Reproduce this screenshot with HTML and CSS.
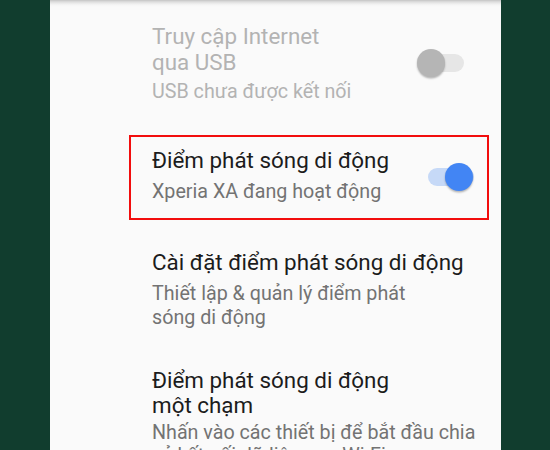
FILE: index.html
```html
<!DOCTYPE html>
<html lang="vi">
<head>
<meta charset="utf-8">
<title>Điểm phát sóng di động</title>
<link rel="stylesheet" href="styles.css">
</head>
<body>
<div class="panel">
  <div class="row row-usb disabled">
    <div class="text">
      <div class="title">Truy cập Internet<br>qua USB</div>
      <div class="sub">USB chưa được kết nối</div>
    </div>
    <div class="switch switch-off"><span class="track"></span><span class="thumb"></span></div>
  </div>
  <div class="row row-hotspot highlighted">
    <div class="text">
      <div class="title">Điểm phát sóng di động</div>
      <div class="sub">Xperia XA đang hoạt động</div>
    </div>
    <div class="switch switch-on"><span class="track"></span><span class="thumb"></span></div>
  </div>
  <div class="row row-settings">
    <div class="text">
      <div class="title">Cài đặt điểm phát sóng di động</div>
      <div class="sub">Thiết lập &amp; quản lý điểm phát<br>sóng di động</div>
    </div>
  </div>
  <div class="row row-onetouch">
    <div class="text">
      <div class="title">Điểm phát sóng di động<br>một chạm</div>
      <div class="sub">Nhấn vào các thiết bị để bắt đầu chia<br>sẻ kết nối dữ liệu qua Wi-Fi</div>
    </div>
  </div>
</div>
</body>
</html>
```

FILE: styles.css
```css
html, body {
  margin: 0;
  padding: 0;
}
body {
  background: #113d2e;
  width: 550px;
  height: 450px;
  overflow: hidden;
  font-family: Roboto, "Noto Sans", sans-serif;
}
.panel {
  margin-left: 50px;
  width: 451px;
  height: 450px;
  overflow: hidden;
  background: linear-gradient(#c2c2c2 0, #d4d4d4 1px, #e8e8e8 3px, #f6f6f6 5px, #fafafa 7px);
  display: flex;
  flex-direction: column;
}
.row {
  position: relative;
  display: flex;
  align-items: center;
  padding-left: 102px;
}
.text {
  flex: 1;
}
.title {
  font-size: 22.4px;
  line-height: 25.5px;
  color: #1c1c1c;
}
.sub {
  margin-top: 5.4px;
  font-size: 19.7px;
  line-height: 23.5px;
  color: #737373;
}
.disabled .title,
.disabled .sub {
  color: #b3b3b3;
}
.row-usb { margin-top: 24.4px; }
.row-usb .sub { margin-top: 4.4px; }
.row-hotspot { margin-top: 44.6px; }
.row-hotspot .sub { margin-top: 6.7px; }
.row-settings { margin-top: 46.5px; }
.row-settings .sub { margin-top: 6.7px; }
.row-onetouch { margin-top: 38.3px; }
.row-onetouch .sub { margin-top: 2.4px; }

.highlighted::after {
  content: "";
  position: absolute;
  left: 79px;
  top: -12.9px;
  width: 360px;
  bottom: -16.4px;
  box-sizing: border-box;
  border: 2px solid #f20d0d;
}

.switch {
  position: relative;
  width: 46px;
  height: 28px;
  flex: none;
}
.switch .track {
  position: absolute;
  left: 0;
  right: 0;
  top: 5px;
  height: 18px;
  border-radius: 9px;
}
.switch .thumb {
  position: absolute;
  top: 0;
  width: 28px;
  height: 28px;
  border-radius: 50%;
  box-shadow: 0 1.5px 2px rgba(0,0,0,0.28);
}
.switch-off {
  margin-right: 37px;
  margin-top: -1.1px;
}
.switch-off .track { background: #e6e6e6; }
.switch-off .thumb { left: -1px; background: #b5b5b5; }
.switch-on {
  margin-right: 27px;
  margin-top: 1.9px;
}
.switch-on .track { background: #c6d9f7; }
.switch-on .thumb { right: 1px; background: #4285f4; }
```
